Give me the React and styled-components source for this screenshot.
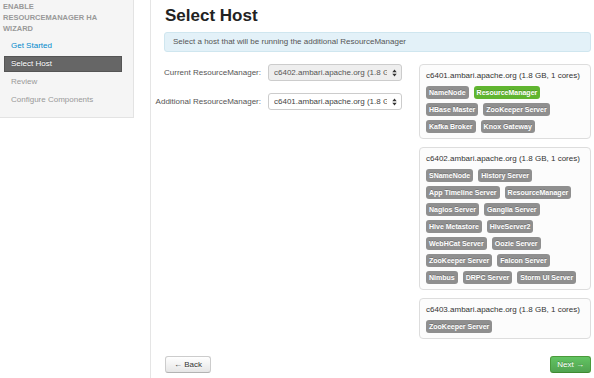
import React from "react";
import styled, { createGlobalStyle } from "styled-components";

const GlobalStyle = createGlobalStyle`
  html, body { margin: 0; padding: 0; background: #fff; }
  body { font-family: "Liberation Sans", Arial, Helvetica, sans-serif; color: #333; }
  * { box-sizing: border-box; }
`;

const Page = styled.div`
  display: flex;
  align-items: stretch;
  min-height: 100vh;
  width: 594px;
`;

const Sidebar = styled.aside`
  width: 134px;
  flex: none;
  margin-right: 16px;
`;

const Well = styled.div`
  background: #f5f5f5;
  border: 1px solid #e3e3e3;
  border-top: none;
  border-left: none;
  padding: 1px 11px 9px 4px;
`;

const WizardTitle = styled.div`
  width: 100px;
  margin-left: -1px;
  font-size: 7.5px;
  line-height: 11px;
  font-weight: bold;
  text-transform: uppercase;
  color: #999;
  margin-bottom: 4px;
`;

const NavList = styled.ul`
  list-style: none;
  margin: 0;
  padding: 0;
  display: flex;
  flex-direction: column;
  gap: 2px;
`;

const navColors = {
  link: "color: #0088cc;",
  active:
    "color: #fff; background: #666; border-color: #555; text-shadow: 0 -1px 0 rgba(0,0,0,0.3);",
  disabled: "color: #999;",
};

const NavItem = styled.li`
  height: 16px;
  line-height: 14px;
  padding: 0 6px;
  font-size: 8px;
  border: 1px solid transparent;
  ${(p) => navColors[p.$state]}
`;

const Main = styled.main`
  flex: 1;
  border-left: 1px solid #e5e5e5;
  padding: 6px 3px 5px 14px;
  display: flex;
  flex-direction: column;
`;

const Title = styled.h2`
  margin: 0 0 6px;
  font-size: 17px;
  line-height: 20px;
  font-weight: bold;
  color: #222;
`;

const Alert = styled.div`
  height: 20px;
  line-height: 18px;
  padding: 0 8px;
  font-size: 8px;
  color: #555;
  background: #e3f1f8;
  border: 1px solid #cfe6ef;
  border-radius: 3px;
  margin: 0 0 12px -1px;
`;

const Content = styled.div`
  display: flex;
  align-items: flex-start;
`;

const Form = styled.div`
  display: flex;
  flex-direction: column;
  gap: 12px;
  width: 237px;
  margin-right: 17px;
`;

const FormRow = styled.div`
  display: flex;
  align-items: center;
  gap: 7px;
`;

const Label = styled.label`
  width: 96px;
  flex: none;
  display: flex;
  justify-content: flex-end;
  white-space: nowrap;
  font-size: 8px;
  color: #555;
`;

const SelectBox = styled.div`
  width: 134px;
  height: 17px;
  display: flex;
  align-items: center;
  padding-left: 5px;
  border: 1px solid #ccc;
  border-radius: 3px;
  background: ${(p) => (p.$disabled ? "#eee" : "#fff")};
  font-size: 8px;
  color: ${(p) => (p.$disabled ? "#555" : "#444")};
`;

const SelectText = styled.span`
  flex: 1;
  overflow: hidden;
  white-space: nowrap;
`;

const SelectArrow = styled.span`
  width: 14px;
  flex: none;
  display: flex;
  justify-content: center;
  align-items: center;
`;

const HostList = styled.div`
  width: 172px;
  display: flex;
  flex-direction: column;
  gap: 8px;
`;

const HostBox = styled.div`
  border: 1px solid #ddd;
  border-radius: 4px;
  background: #fcfcfc;
  padding: 5px 6px;
`;

const HostName = styled.div`
  font-size: 8px;
  line-height: 12px;
  color: #333;
  margin-bottom: 4px;
  white-space: nowrap;
`;

const BadgeRows = styled.div`
  display: flex;
  flex-direction: column;
  gap: 4px;
`;

const BadgeRow = styled.div`
  display: flex;
  gap: 5px;
`;

const Badge = styled.span`
  display: inline-block;
  height: 13px;
  line-height: 9px;
  padding: 2px 3px;
  border-radius: 3px;
  font-size: 7px;
  font-weight: bold;
  white-space: nowrap;
  color: #fff;
  text-shadow: 0 -1px 0 rgba(0, 0, 0, 0.2);
  background: ${(p) => (p.$active ? "#60b530" : "#8f8f8f")};
`;

const Footer = styled.div`
  margin-top: auto;
  display: flex;
  justify-content: space-between;
`;

const Button = styled.button`
  height: 17px;
  padding: 0 ${(p) => (p.$primary ? "6px" : "8px")};
  font-family: inherit;
  font-size: 8px;
  line-height: 15px;
  border-radius: 3px;
  cursor: pointer;
  border: 1px solid ${(p) => (p.$primary ? "#4a9a3a" : "#ccc")};
  border-bottom-color: ${(p) => (p.$primary ? "#3e8a30" : "#b3b3b3")};
  color: ${(p) => (p.$primary ? "#fff" : "#333")};
  text-shadow: ${(p) =>
    p.$primary ? "0 -1px 0 rgba(0,0,0,0.25)" : "0 1px 1px rgba(255,255,255,0.75)"};
  background: ${(p) =>
    p.$primary
      ? "linear-gradient(#62c462, #51a351)"
      : "linear-gradient(#ffffff, #e6e6e6)"};
`;

const UpDown = () => (
  <svg width="5" height="8" viewBox="0 0 5 8">
    <path d="M2.5 0.5 L4.7 3.2 H0.3 Z M2.5 7.5 L4.7 4.8 H0.3 Z" fill="#333" />
  </svg>
);

const hosts = [
  {
    name: "c6401.ambari.apache.org (1.8 GB, 1 cores)",
    rows: [
      [["NameNode"], ["ResourceManager", true]],
      [["HBase Master"], ["ZooKeeper Server"]],
      [["Kafka Broker"], ["Knox Gateway"]],
    ],
  },
  {
    name: "c6402.ambari.apache.org (1.8 GB, 1 cores)",
    rows: [
      [["SNameNode"], ["History Server"]],
      [["App Timeline Server"], ["ResourceManager"]],
      [["Nagios Server"], ["Ganglia Server"]],
      [["Hive Metastore"], ["HiveServer2"]],
      [["WebHCat Server"], ["Oozie Server"]],
      [["ZooKeeper Server"], ["Falcon Server"]],
      [["Nimbus"], ["DRPC Server"], ["Storm UI Server"]],
    ],
  },
  {
    name: "c6403.ambari.apache.org (1.8 GB, 1 cores)",
    rows: [[["ZooKeeper Server"]]],
  },
];

const Select = ({ value, disabled }) => (
  <SelectBox $disabled={disabled}>
    <SelectText>{value}</SelectText>
    <SelectArrow>
      <UpDown />
    </SelectArrow>
  </SelectBox>
);

export default function App() {
  return (
    <>
      <GlobalStyle />
      <Page>
        <Sidebar>
          <Well>
            <WizardTitle>Enable ResourceManager HA Wizard</WizardTitle>
            <NavList>
              <NavItem $state="link">Get Started</NavItem>
              <NavItem $state="active">Select Host</NavItem>
              <NavItem $state="disabled">Review</NavItem>
              <NavItem $state="disabled">Configure Components</NavItem>
            </NavList>
          </Well>
        </Sidebar>
        <Main>
          <Title>Select Host</Title>
          <Alert>Select a host that will be running the additional ResourceManager</Alert>
          <Content>
            <Form>
              <FormRow>
                <Label>Current ResourceManager:</Label>
                <Select disabled value="c6402.ambari.apache.org (1.8 GB, 1 cores)" />
              </FormRow>
              <FormRow>
                <Label>Additional ResourceManager:</Label>
                <Select value="c6401.ambari.apache.org (1.8 GB, 1 cores)" />
              </FormRow>
            </Form>
            <HostList>
              {hosts.map((h) => (
                <HostBox key={h.name}>
                  <HostName>{h.name}</HostName>
                  <BadgeRows>
                    {h.rows.map((row, i) => (
                      <BadgeRow key={i}>
                        {row.map(([label, active]) => (
                          <Badge key={label} $active={active}>
                            {label}
                          </Badge>
                        ))}
                      </BadgeRow>
                    ))}
                  </BadgeRows>
                </HostBox>
              ))}
            </HostList>
          </Content>
          <Footer>
            <Button>← Back</Button>
            <Button $primary>Next →</Button>
          </Footer>
        </Main>
      </Page>
    </>
  );
}
